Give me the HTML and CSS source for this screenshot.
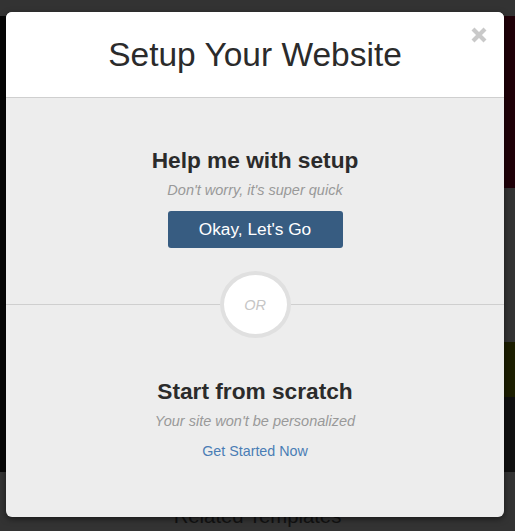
FILE: index.html
```html
<!DOCTYPE html>
<html lang="en">
<head>
    <meta charset="UTF-8">
    <meta name="viewport" content="width=device-width, initial-scale=1.0">
    <title>Setup Your Website</title>
    <link rel="stylesheet" href="styles.css">
</head>
<body>
    <!-- page behind the overlay -->
    <div class="page">
        <div class="topbar"></div>
        <div class="hero">
            <div class="hero-main"></div>
            <div class="hero-side">
                <div class="band band-red"></div>
                <div class="band band-grey"></div>
                <div class="band band-olive"></div>
                <div class="band band-dark"></div>
            </div>
        </div>
        <div class="footer">
            <h3>Related Templates</h3>
        </div>
    </div>

    <!-- setup modal -->
    <div class="modal">
        <button class="close" aria-label="Close">
            <svg width="16" height="16" viewBox="0 0 16 16">
                <path d="M2 2 L14 14 M14 2 L2 14" stroke="#c9c9c9" stroke-width="4.2" fill="none"/>
            </svg>
        </button>
        <div class="modal-header">
            <h1>Setup Your Website</h1>
        </div>
        <div class="modal-body">
            <div class="option">
                <h2>Help me with setup</h2>
                <p class="hint">Don't worry, it's super quick</p>
                <button class="btn-primary">Okay, Let's Go</button>
            </div>

            <div class="divider">
                <span class="line"></span>
                <span class="or">OR</span>
                <span class="line"></span>
            </div>

            <div class="option option-scratch">
                <h2>Start from scratch</h2>
                <p class="hint hint-scratch">Your site won't be personalized</p>
                <a href="#" class="link">Get Started Now</a>
            </div>
        </div>
    </div>
</body>
</html>
```

FILE: styles.css
```css
/* base */
body {
    margin: 0;
    font-family: "Liberation Sans", Arial, sans-serif;
    background: #333;
    overflow: hidden;
}

/* page behind */
.page {
    height: 531px;
    display: flex;
    flex-direction: column;
}

.topbar {
    height: 16px;
    background: #333;
}

.hero {
    height: 456px;
    display: flex;
}

.hero-main {
    flex: 1;
    background: #060606;
}

.hero-side {
    width: 11px;
    display: flex;
    flex-direction: column;
}

.band-red { height: 174px; background: #1f0008; }
.band-grey { height: 155px; background: #333; }
.band-olive { height: 55px; background: #1c1e00; }
.band-dark { height: 76px; background: #101010; }

.footer {
    flex: 1;
    background: #333;
    text-align: center;
}

.footer h3 {
    margin: 32px 0 0;
    font-size: 20.3px;
    font-weight: normal;
    line-height: 24px;
    color: #121212;
}

/* modal */
.modal {
    position: absolute;
    left: 6px;
    top: 12px;
    width: 498px;
    height: 505px;
    background: #ededed;
    border-radius: 6px;
    overflow: hidden;
    box-shadow: 0 2px 6px rgba(0,0,0,0.5);
}

.close {
    position: absolute;
    top: 15px;
    right: 17px;
    padding: 0;
    border: none;
    background: none;
    line-height: 0;
    cursor: pointer;
}

.modal-header {
    background: #fff;
    border-bottom: 1px solid #cfcfcf;
    padding: 23px 0 22px;
    text-align: center;
}

.modal-header h1 {
    margin: 0;
    font-size: 33.5px;
    font-weight: normal;
    line-height: 40px;
    color: #2b2b2b;
}

.modal-body {
    padding-top: 49px;
    text-align: center;
}

.option h2 {
    margin: 0;
    font-size: 22.7px;
    line-height: 26px;
    color: #2b2b2b;
}

.hint {
    margin: 7px 0 0;
    font-size: 14.5px;
    font-style: italic;
    line-height: 20px;
    color: #999;
}

.btn-primary {
    margin-top: 11px;
    width: 175px;
    height: 37px;
    background: #375c81;
    color: #fff;
    border: none;
    border-radius: 3px;
    font-family: inherit;
    font-size: 17.3px;
    cursor: pointer;
}

/* or divider */
.divider {
    margin-top: 23px;
    display: flex;
    align-items: center;
}

.divider .line {
    flex: 1;
    height: 1px;
    background: #cfcfcf;
}

.or {
    box-sizing: border-box;
    width: 71px;
    height: 67px;
    border: 4px solid #e0e0e0;
    border-radius: 50%;
    background: #fff;
    display: flex;
    align-items: center;
    justify-content: center;
    font-size: 14.5px;
    font-style: italic;
    color: #c6c6c6;
}

.option-scratch {
    margin-top: 40px;
}

.hint-scratch {
    margin-top: 7px;
}

.link {
    display: inline-block;
    margin-top: 10px;
    font-size: 14.3px;
    line-height: 20px;
    color: #4a7db5;
    text-decoration: none;
}
```
